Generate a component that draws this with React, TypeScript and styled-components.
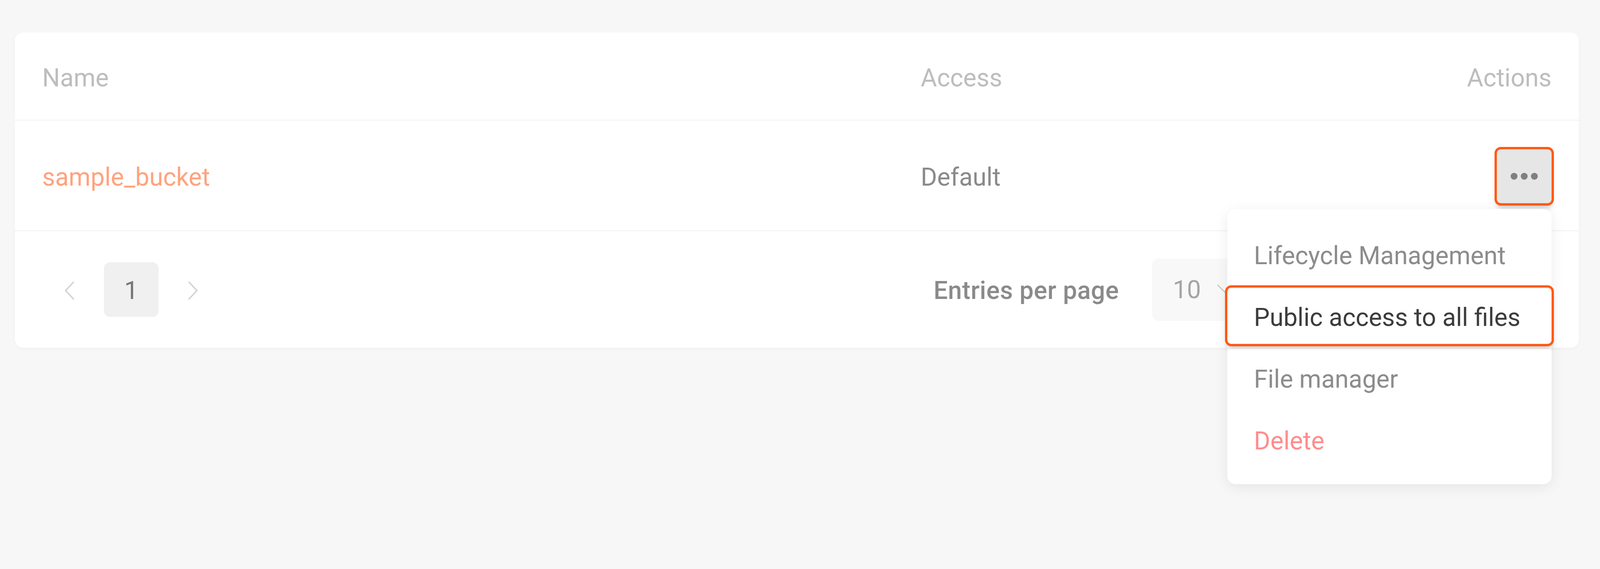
import React from "react";
import styled, { createGlobalStyle } from "styled-components";

const GlobalStyle = createGlobalStyle`
  html, body {
    margin: 0;
    background: #f7f7f7;
    overflow: hidden;
  }
  body {
    font-family: Roboto, "Liberation Sans", sans-serif;
    -webkit-font-smoothing: antialiased;
  }
`;

const Page = styled.div`
  min-height: 100vh;
  box-sizing: border-box;
  padding: 83px 54px 0 38px;
`;

const Card = styled.div`
  background: #ffffff;
  border-radius: 21px;
  box-shadow: 0 3px 9px rgba(0, 0, 0, 0.035);
`;

const Row = styled.div<{ $height: number }>`
  display: grid;
  grid-template-columns: 2249px 1fr 350px;
  align-items: center;
  box-sizing: border-box;
  height: ${(p) => p.$height}px;
  padding: 0 70px;
  border-bottom: 3px solid #f5f5f5;
`;

const HeadCell = styled.div<{ $right?: boolean }>`
  padding-top: 9px;
  font-size: 64px;
  color: #bdbdbd;
  text-align: ${(p) => (p.$right ? "right" : "left")};
`;

const BucketName = styled.a`
  padding-top: 9px;
  font-size: 64px;
  color: #ffa37e;
  text-decoration: none;
`;

const AccessText = styled.div`
  padding-top: 9px;
  font-size: 64px;
  color: #8a8a8a;
`;

const ActionsCell = styled.div`
  display: flex;
  justify-content: flex-end;
  padding-top: 4px;
`;

const MenuAnchor = styled.div`
  position: relative;
`;

const MoreButton = styled.button`
  display: flex;
  align-items: center;
  justify-content: center;
  width: 140px;
  height: 138px;
  padding: 0;
  border: none;
  border-radius: 10px;
  background: #e6e6e6;
  box-shadow: 0 0 0 6px #ff5a14, 0 12px 14px rgba(0, 0, 0, 0.22);
  cursor: pointer;
`;

const Menu = styled.div`
  position: absolute;
  top: calc(100% + 15px);
  right: 0;
  z-index: 10;
  width: 830px;
  box-sizing: border-box;
  padding: 43px 0;
  display: flex;
  flex-direction: column;
  gap: 14px;
  background: #ffffff;
  border-radius: 21px;
  box-shadow: 0 7px 35px rgba(0, 0, 0, 0.08);
`;

const MenuItem = styled.div<{ $active?: boolean; $danger?: boolean }>`
  display: flex;
  align-items: center;
  box-sizing: border-box;
  height: 144px;
  padding: 9px 68px 0;
  border-radius: 10px;
  font-size: 64px;
  white-space: nowrap;
  color: ${(p) => (p.$danger ? "#ff8d8d" : p.$active ? "#3c3c3c" : "#8c8c8c")};
  background: #ffffff;
  box-shadow: ${(p) =>
    p.$active ? "0 0 0 6px #ff5a14, 0 12px 14px rgba(0, 0, 0, 0.22)" : "none"};
`;

const Footer = styled.div`
  display: grid;
  grid-template-columns: 2282px 1fr;
  align-items: center;
  height: 298px;
  padding: 0 70px;
`;

const Pager = styled.div`
  display: flex;
  gap: 18px;
`;

const PageButton = styled.div<{ $active?: boolean }>`
  display: flex;
  align-items: center;
  justify-content: center;
  box-sizing: border-box;
  width: 140px;
  height: 140px;
  padding-top: 4px;
  border-radius: 16px;
  font-size: 64px;
  color: #777777;
  background: ${(p) => (p.$active ? "#f0f0f0" : "transparent")};
`;

const PerPage = styled.div`
  display: flex;
  align-items: center;
  gap: 84px;
`;

const PerPageLabel = styled.div`
  padding-top: 4px;
  font-size: 64px;
  font-weight: 500;
  letter-spacing: 0.6px;
  color: #8a8a8a;
`;

const Select = styled.div`
  display: flex;
  align-items: center;
  gap: 40px;
  height: 159px;
  padding: 0 51px 0 54px;
  border-radius: 17px;
  background: #f8f8f8;
  font-size: 64px;
  color: #a5a5a5;
`;

const Chevron = ({ dir }: { dir: "left" | "right" }) => (
  <svg width="26" height="49" viewBox="0 0 26 49" fill="none">
    <polyline
      points={dir === "left" ? "24,2 3,24.5 24,47" : "2,2 23,24.5 2,47"}
      stroke="#d2d2d2"
      strokeWidth="3.5"
    />
  </svg>
);

const Dots = () => (
  <svg width="70" height="18" viewBox="0 0 70 18">
    <circle cx="9" cy="9" r="8.75" fill="#808080" />
    <circle cx="35" cy="9" r="8.75" fill="#808080" />
    <circle cx="61" cy="9" r="8.75" fill="#808080" />
  </svg>
);

const SelectArrow = () => (
  <svg width="52" height="28" viewBox="0 0 52 28" fill="none">
    <polyline points="2,2 26,26 50,2" stroke="#c5c5c5" strokeWidth="2.6" />
  </svg>
);

const menuItems = [
  { label: "Lifecycle Management" },
  { label: "Public access to all files", active: true },
  { label: "File manager" },
  { label: "Delete", danger: true },
];

export default function App() {
  return (
    <>
      <GlobalStyle />
      <Page>
        <Card>
          <Row $height={226}>
            <HeadCell>Name</HeadCell>
            <HeadCell>Access</HeadCell>
            <HeadCell $right>Actions</HeadCell>
          </Row>
          <Row $height={283}>
            <BucketName href="#">sample_bucket</BucketName>
            <AccessText>Default</AccessText>
            <ActionsCell>
              <MenuAnchor>
                <MoreButton aria-label="Actions">
                  <Dots />
                </MoreButton>
                <Menu>
                  {menuItems.map((item) => (
                    <MenuItem
                      key={item.label}
                      $active={item.active}
                      $danger={item.danger}
                    >
                      {item.label}
                    </MenuItem>
                  ))}
                </Menu>
              </MenuAnchor>
            </ActionsCell>
          </Row>
          <Footer>
            <Pager>
              <PageButton>
                <Chevron dir="left" />
              </PageButton>
              <PageButton $active>1</PageButton>
              <PageButton>
                <Chevron dir="right" />
              </PageButton>
            </Pager>
            <PerPage>
              <PerPageLabel>Entries per page</PerPageLabel>
              <Select>
                <span>10</span>
                <SelectArrow />
              </Select>
            </PerPage>
          </Footer>
        </Card>
      </Page>
    </>
  );
}
